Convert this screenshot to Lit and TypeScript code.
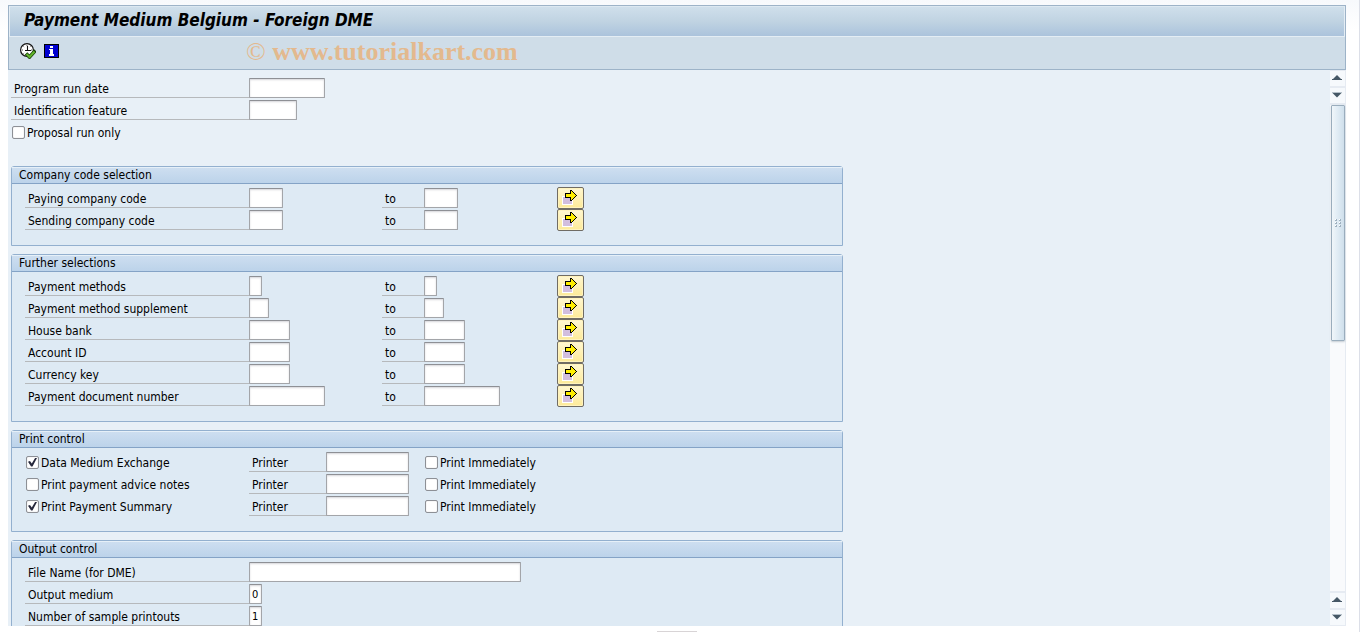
import { LitElement, html, css, svg, nothing } from "lit";
import { customElement } from "lit/decorators.js";
import { styleMap } from "lit/directives/style-map.js";

interface RangeField {
  id: string;
  label: string;
  width: number;
}

interface PrintOption {
  id: string;
  label: string;
  checked: boolean;
}

interface SingleField {
  id: string;
  label: string;
  width: number;
  value: string;
}

const header: SingleField[] = [
  { id: "run-date", label: "Program run date", width: 76, value: "" },
  { id: "feature", label: "Identification feature", width: 48, value: "" },
];

const companyCodes: RangeField[] = [
  { id: "paying", label: "Paying company code", width: 34 },
  { id: "sending", label: "Sending company code", width: 34 },
];

const further: RangeField[] = [
  { id: "methods", label: "Payment methods", width: 13 },
  { id: "supplement", label: "Payment method supplement", width: 20 },
  { id: "bank", label: "House bank", width: 41 },
  { id: "account", label: "Account ID", width: 41 },
  { id: "currency", label: "Currency key", width: 41 },
  { id: "document", label: "Payment document number", width: 76 },
];

const prints: PrintOption[] = [
  { id: "dme", label: "Data Medium Exchange", checked: true },
  { id: "advice", label: "Print payment advice notes", checked: false },
  { id: "summary", label: "Print Payment Summary", checked: true },
];

const outputs: SingleField[] = [
  { id: "file", label: "File Name (for DME)", width: 272, value: "" },
  { id: "medium", label: "Output medium", width: 13, value: "0" },
  { id: "samples", label: "Number of sample printouts", width: 13, value: "1" },
];

const arrowIcon = html`<svg class="arrow" width="15" height="15" viewBox="0 0 15 15" shape-rendering="crispEdges" aria-hidden="true">
  <rect x="0" y="6" width="11" height="9" fill="#fff" />
  <rect x="1" y="7" width="9" height="7" fill="#d2bede" />
  <path fill="#000" d="M8 0h2v1h1v1h1v1h1v1h1v1h1v1h-1v1h-1v1h-1v1h-1v1h-1v1h-2v-3h-5v-5h5z" />
  <path fill="#ffee00" d="M9 1h1v1h1v1h1v1h1v1h1v1h-1v1h-1v1h-1v1h-1v1h-1v-3h-5v-3h5z" />
</svg>`;

const executeIcon = html`<svg width="16" height="16" viewBox="0 0 16 16" aria-hidden="true">
  <circle cx="7" cy="7" r="6.4" fill="#fff" stroke="#111" stroke-width="1.2" />
  <path d="M7 2v1M7 11v1M2 7h1M11 7h1M3.5 3.5l.6.6M10.5 3.5l-.6.6M3.5 10.5l.6-.6" stroke="#555" stroke-width="1" />
  <path d="M7.5 3v4.5H11M5 7.5h2" stroke="#111" stroke-width="1.1" fill="none" />
  <path d="M6 10.5l3.500 3.500 6-6.500" stroke="#173f08" stroke-width="3.600" fill="none" />
  <path d="M6.500 11l3 3 5-5.500" stroke="#62b52b" stroke-width="2" fill="none" />
</svg>`;

const infoIcon = html`<svg width="15" height="14" viewBox="0 0 15 14" shape-rendering="crispEdges" aria-hidden="true">
  <rect width="15" height="14" fill="#000" />
  <rect x="1" y="1" width="13" height="12" fill="#0000d0" />
  <path d="M6 2h3v2h-3zM5 5h4v5h1v2h-5v-2h1v-4h-1z" fill="#fff" />
</svg>`;

const triangle = (down: boolean) => html`<svg width="10" height="6" viewBox="0 0 10 6" aria-hidden="true">
  ${down
    ? svg`<path d="M0 0h10v1H0z" fill="#b5c0c9" /><path d="M0.500 1h9L5 5.500z" fill="#465866" />`
    : svg`<path d="M5 0l4.500 4.500h-9z" fill="#465866" /><path d="M0 4h10v1H0z" fill="#465866" />`}
</svg>`;

@customElement("app-root")
export class AppRoot extends LitElement {
  static styles = css`
    :host {
      display: block;
      font: 12px/18px "DejaVu Sans Condensed", "DejaVu Sans", sans-serif;
      color: #000;
    }
    * { box-sizing: border-box; }
    .page {
      display: flex;
      flex-direction: column;
      align-items: center;
      height: 100vh;
      padding: 5px 13px 0 8px;
      background: linear-gradient(#f7f9fc, #fff 30px);
      border-right: 1px solid #dcdfe8;
    }
    .window {
      align-self: stretch;
      flex: 1;
      min-height: 0;
      display: flex;
      flex-direction: column;
      background: #e8f0f7;
    }
    .head {
      border: 1px solid #9db3c8;
      background: #cfdde8;
    }
    .title {
      margin: 0;
      padding: 0 14px;
      height: 31px;
      font-size: 17px;
      font-style: italic;
      font-weight: bold;
      line-height: 26px;
      background: linear-gradient(#cfdfeb, #c0d3e2 50%, #abc3dc);
      border: 1px solid #e4edf4;
      border-top-color: #dce8f1;
    }
    .toolbar {
      display: flex;
      align-items: center;
      height: 32px;
      padding: 0 11px 4px;
      gap: 8px;
    }
    .tool {
      display: flex;
      padding: 0;
      border: 0;
      background: none;
    }
    .watermark {
      margin-left: 179px;
      padding-top: 2px;
      font: bold 26px/28px "Liberation Serif", serif;
      color: #e3b98e;
    }
    .mark { font-weight: normal; }
    .body {
      flex: 1;
      min-height: 0;
      display: flex;
    }
    .content {
      flex: 1;
      min-width: 0;
      overflow: hidden;
      padding: 7px 3px 0;
    }
    .row {
      display: grid;
      align-items: center;
      height: 22px;
    }
    .single { grid-template-columns: 224px 1fr; }
    .top .single { grid-template-columns: 238px 1fr; }
    .range { grid-template-columns: 224px 133px 42px 133px 1fr; }
    .print { grid-template-columns: 224px 77px 98px 1fr; }
    .top { margin-bottom: 23px; }
    .label {
      height: 20px;
      padding: 0 3px;
      line-height: 22px;
      border-bottom: 1px solid #b6b9bc;
      white-space: nowrap;
    }
    .field {
      height: 20px;
      margin: 0;
      padding: 0 2px;
      font: inherit;
      font-size: 11px;
      color: #000;
      background: #fff;
      border: 1px solid #a3a5a9;
      border-top-color: #8e9095;
      border-radius: 1px;
      box-shadow: inset 0 1px 2px #d5d5da;
      outline: 0;
    }
    .check {
      display: flex;
      align-items: center;
      gap: 2px;
      padding-left: 1px;
      line-height: 20px;
      white-space: nowrap;
    }
    .caption-text { padding-top: 2px; }
    .box {
      appearance: none;
      display: grid;
      place-items: center;
      width: 13px;
      height: 13px;
      margin: 0;
      background: #fff;
      border: 1px solid #8d9096;
      border-radius: 2px;
      box-shadow: inset 0 0 1px #b5b5bb;
    }
    .box:checked::after {
      content: "";
      width: 9px;
      height: 9px;
      background: #26283c;
      clip-path: polygon(0 48%, 22% 40%, 42% 66%, 82% 0, 100% 6%, 50% 100%, 34% 100%);
    }
    .group {
      width: 832px;
      max-width: 100%;
      margin: 0 0 8px;
      border: 1px solid #93b0cf;
      border-radius: 3px 3px 0 0;
      background: #deeaf4;
    }
    .caption {
      margin: 0;
      height: 17px;
      padding: 0 7px;
      font-size: 12px;
      font-weight: normal;
      line-height: 15px;
      background: linear-gradient(#cddef0, #bcd3ea);
      border-top: 1px solid #e6f0f8;
      border-bottom: 1px solid #84a3c6;
    }
    .rows { padding: 3px 13px 14px; }
    .more {
      width: 27px;
      height: 22px;
      padding: 0 0 1px 4px;
      border: 1px solid #706c64;
      border-radius: 2px;
      background: linear-gradient(#fff7d2, #fdea98);
      box-shadow: inset 0 0 0 1px #fff3bd;
      display: flex;
      align-items: center;
    }
    .bar {
      width: 16px;
      padding: 1px 1px 1px 0;
      display: flex;
      flex-direction: column;
      gap: 2px;
      background: #e6ebf2;
    }
    .step {
      display: grid;
      place-items: center;
      height: 15px;
      padding: 0 1px 1px 0;
      border: 0;
      background: #f6f9fc;
    }
    .track {
      flex: 1;
      min-height: 0;
      padding-left: 1px;
      background: #f9fafc;
    }
    .thumb {
      display: grid;
      place-items: center;
      border: 1px solid #9aadbd;
      border-radius: 1px;
      background: linear-gradient(90deg, #f0f6fa, #dfebf4 50%, #cfdfeb);
      box-shadow: 0 1px 2px #c5ccd3;
    }
    .handle {
      width: 40px;
      height: 1px;
      margin-top: 5px;
      background: #d8d4d6;
    }
  `;

  private input(id: string, width: number, value = "", name = "") {
    return html`<input class="field" id=${id} type="text" .value=${value}
      aria-label=${name || nothing} style=${styleMap({ width: `${width}px` })} />`;
  }

  private single(f: SingleField) {
    return html`<div class="row single">
      <label class="label" for=${f.id}>${f.label}</label>
      ${this.input(f.id, f.width, f.value)}
    </div>`;
  }

  private range(f: RangeField) {
    return html`<div class="row range">
      <label class="label" for=${f.id}>${f.label}</label>
      ${this.input(f.id, f.width)}
      <label class="label" for="${f.id}-to">to</label>
      ${this.input(`${f.id}-to`, f.width)}
      <button class="more" aria-label="Multiple selection">${arrowIcon}</button>
    </div>`;
  }

  private check(label: string, checked: boolean) {
    return html`<label class="check">
      <input class="box" type="checkbox" .checked=${checked} />
      <span class="caption-text">${label}</span>
    </label>`;
  }

  private print(p: PrintOption) {
    return html`<div class="row print">
      ${this.check(p.label, p.checked)}
      <label class="label" for=${p.id}>Printer</label>
      ${this.input(p.id, 83)}
      ${this.check("Print Immediately", false)}
    </div>`;
  }

  private group(title: string, rows: unknown) {
    return html`<section class="group">
      <h2 class="caption">${title}</h2>
      <div class="rows">${rows}</div>
    </section>`;
  }

  render() {
    return html`<div class="page">
      <main class="window">
        <header class="head">
          <h1 class="title">Payment Medium Belgium - Foreign DME</h1>
          <div class="toolbar">
            <button class="tool" aria-label="Execute">${executeIcon}</button>
            <button class="tool" aria-label="Information">${infoIcon}</button>
            <span class="watermark"><span class="mark">©</span> www.tutorialkart.com</span>
          </div>
        </header>
        <div class="body">
          <div class="content">
            <div class="top">
              ${header.map((f) => this.single(f))}
              <div class="row">${this.check("Proposal run only", false)}</div>
            </div>
            ${this.group("Company code selection", companyCodes.map((f) => this.range(f)))}
            ${this.group("Further selections", further.map((f) => this.range(f)))}
            ${this.group("Print control", prints.map((p) => this.print(p)))}
            ${this.group("Output control", outputs.map((f) => this.single(f)))}
          </div>
          <div class="bar">
            <button class="step" aria-label="Scroll up">${triangle(false)}</button>
            <button class="step" aria-label="Scroll down">${triangle(true)}</button>
            <div class="track">
              <div class="thumb" style=${styleMap({ height: "48.6%" })}>
                <svg width="7" height="8" viewBox="0 0 7 8" shape-rendering="crispEdges" aria-hidden="true">
                  <path d="M0 0h2v2H0zM4 0h2v2H4zM0 3h2v2H0zM4 3h2v2H4zM0 6h2v2H0zM4 6h2v2H4z" fill="#9fb1c0" />
                  <path d="M0 0h1v1H0zM4 0h1v1H4zM0 3h1v1H0zM4 3h1v1H4zM0 6h1v1H0zM4 6h1v1H4z" fill="#fff" />
                </svg>
              </div>
            </div>
            <button class="step" aria-label="Scroll up">${triangle(false)}</button>
            <button class="step" aria-label="Scroll down">${triangle(true)}</button>
          </div>
        </div>
      </main>
      <div class="handle"></div>
    </div>`;
  }
}
